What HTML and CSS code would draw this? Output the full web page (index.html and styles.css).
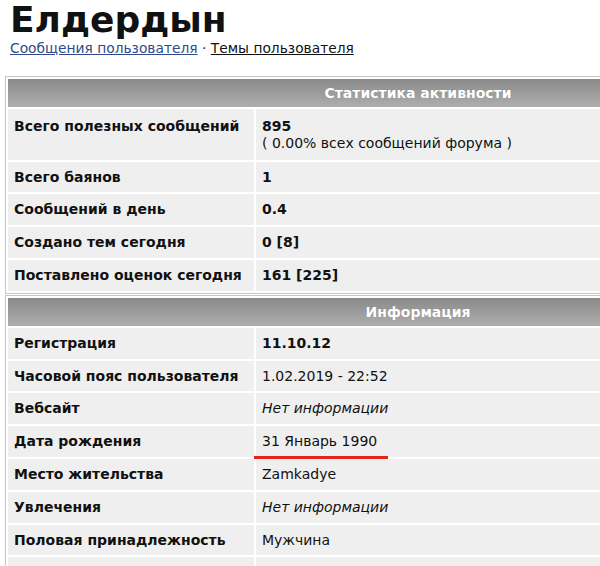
FILE: index.html
```html
<!DOCTYPE html>
<html lang="ru">
<head>
<meta charset="utf-8">
<title>Елдердын</title>
<link rel="stylesheet" href="styles.css">
</head>
<body>
<div class="page">
  <h1 class="username">Елдердын</h1>
  <div class="userlinks">
    <a class="link-posts" href="#">Сообщения пользователя</a> · <a class="link-topics" href="#">Темы пользователя</a>
  </div>

  <table class="panel panel-first">
    <tr><th colspan="2" class="panel-head">Статистика активности</th></tr>
    <tr class="row-tall">
      <td class="label">Всего полезных сообщений</td>
      <td class="value"><b>895</b><br>( 0.00% всех сообщений форума )</td>
    </tr>
    <tr><td class="label">Всего баянов</td><td class="value"><b>1</b></td></tr>
    <tr><td class="label">Сообщений в день</td><td class="value"><b>0.4</b></td></tr>
    <tr><td class="label">Создано тем сегодня</td><td class="value"><b>0 [8]</b></td></tr>
    <tr><td class="label">Поставлено оценок сегодня</td><td class="value"><b>161 [225]</b></td></tr>
  </table>

  <table class="panel">
    <tr><th colspan="2" class="panel-head">Информация</th></tr>
    <tr><td class="label">Регистрация</td><td class="value"><b>11.10.12</b></td></tr>
    <tr><td class="label">Часовой пояс пользователя</td><td class="value">1.02.2019 - 22:52</td></tr>
    <tr><td class="label">Вебсайт</td><td class="value"><i>Нет информации</i></td></tr>
    <tr><td class="label">Дата рождения</td><td class="value marked">31 Январь 1990<span class="redline"></span></td></tr>
    <tr><td class="label">Место жительства</td><td class="value">Zamkadye</td></tr>
    <tr><td class="label">Увлечения</td><td class="value"><i>Нет информации</i></td></tr>
    <tr><td class="label">Половая принадлежность</td><td class="value">Мужчина</td></tr>
    <tr><td class="label">&nbsp;</td><td class="value">&nbsp;</td></tr>
  </table>
</div>
</body>
</html>
```

FILE: styles.css
```css
html, body {
  margin: 0;
  padding: 0;
  background: #ffffff;
  overflow: hidden;
}

.page {
  padding: 0 0 0 5px;
  font-family: "DejaVu Sans", Verdana, sans-serif;
  color: #111;
}

.username {
  margin: 0 0 0 5px;
  padding-top: 1px;
  font-size: 36px;
  line-height: 38px;
  font-weight: bold;
  color: #111;
}

.userlinks {
  margin: 0 0 0 5px;
  font-size: 13.8px;
  line-height: 18px;
  color: #222;
}

.link-posts {
  color: #2f4a8a;
  text-decoration: underline;
}

.link-topics {
  color: #111;
  text-decoration: underline;
}

.panel {
  width: 826px;
  border: 1px solid #c6c6c6;
  border-spacing: 2px;
  background: #ffffff;
  font-size: 14px;
}

.panel-first {
  margin-top: 19px;
}

.panel + .panel {
  margin-top: 1px;
}

.panel-head {
  height: 28px;
  padding: 0;
  background: linear-gradient(to bottom, #8a8a8a, #aeaeae);
  color: #ffffff;
  font-weight: bold;
  text-align: center;
  text-shadow: 0 0 1px rgba(0, 0, 0, 0.15);
}

.label,
.value {
  background: #efefef;
  padding: 7px 6px;
  line-height: 16.8px;
  text-align: left;
  vertical-align: top;
}

.row-tall .label,
.row-tall .value {
  padding-top: 9px;
  padding-bottom: 8px;
}

.label {
  width: 234px;
  font-weight: bold;
  white-space: nowrap;
}

.value {
  padding-left: 6px;
}

.marked {
  position: relative;
}

.redline {
  position: absolute;
  left: -2px;
  top: 30px;
  width: 134px;
  height: 3px;
  background: #e2261c;
}
```
